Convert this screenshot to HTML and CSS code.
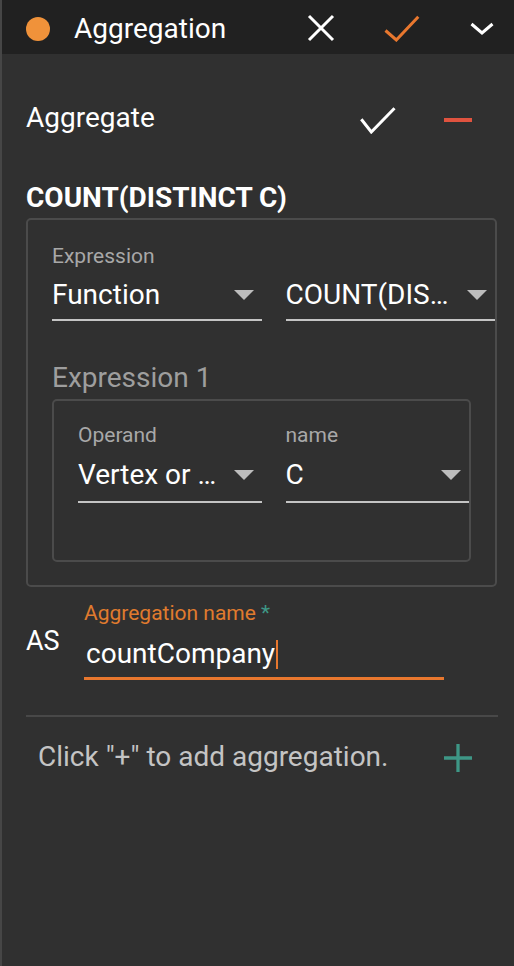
FILE: index.html
```html
<!DOCTYPE html>
<html>
<head>
<meta charset="utf-8">
<link rel="stylesheet" href="styles.css">
</head>
<body>
<div class="panel">
  <header class="header">
    <span class="dot"></span>
    <span class="title">Aggregation</span>
    <svg class="ic-close" width="28" height="28" viewBox="0 0 28 28"><path d="M2 2L26 26M26 2L2 26" stroke="#fff" stroke-width="3" fill="none"/></svg>
    <svg class="ic-ok" width="36" height="28" viewBox="0 0 36 28"><path d="M1.5 16.5L12.3 26L34.3 2.7" stroke="#e8772e" stroke-width="3" fill="none"/></svg>
    <svg class="ic-chev" width="24" height="14" viewBox="0 0 24 14"><path d="M1.5 2L12 11L22.5 2" stroke="#fff" stroke-width="3" fill="none"/></svg>
  </header>

  <div class="content">
    <div class="agg-row">
      <span class="agg-label">Aggregate</span>
      <svg class="ic-check" width="36" height="27" viewBox="0 0 36 27"><path d="M1.3 12.3L11.3 25L34.5 1.3" stroke="#fff" stroke-width="3" fill="none"/></svg>
      <svg class="ic-minus" width="28" height="4" viewBox="0 0 28 4"><rect x="0" y="0" width="28" height="4" fill="#e0533f"/></svg>
    </div>

    <div class="section-title">COUNT(DISTINCT C)</div>

    <div class="box outer">
      <div class="field-row">
        <div class="field">
          <div class="label">Expression</div>
          <div class="select"><span class="value">Function</span><span class="arrow"></span></div>
        </div>
        <div class="field">
          <div class="label">&nbsp;</div>
          <div class="select"><span class="value">COUNT(DIS…</span><span class="arrow"></span></div>
        </div>
      </div>

      <div class="sub-title">Expression 1</div>
      <div class="box inner">
        <div class="field-row">
          <div class="field">
            <div class="label">Operand</div>
            <div class="select"><span class="value">Vertex or …</span><span class="arrow"></span></div>
          </div>
          <div class="field">
            <div class="label">name</div>
            <div class="select"><span class="value">C</span><span class="arrow"></span></div>
          </div>
        </div>
      </div>
    </div>

    <div class="as-row">
      <span class="as">AS</span>
      <div class="name-field">
        <div class="label focus">Aggregation name <span class="req">*</span></div>
        <div class="input"><span class="input-text">countCompany</span><span class="caret"></span></div>
      </div>
    </div>

    <div class="divider"></div>

    <div class="add-row">
      <span class="hint">Click "+" to add aggregation.</span>
      <svg class="ic-plus" width="28" height="28" viewBox="0 0 28 28"><path d="M14 0V28M0 14H28" stroke="#3e9786" stroke-width="3.3" fill="none"/></svg>
    </div>
  </div>
</div>
</body>
</html>
```

FILE: styles.css
```css
* { box-sizing: border-box; }
html, body {
  margin: 0;
  padding: 0;
  background: #303030;
}
body {
  font-family: Roboto, "Noto Sans", sans-serif;
  color: #fff;
}
.panel {
  width: 514px;
  min-height: 966px;
  background: #303030;
  border-left: 2px solid #464646;
}
.header {
  height: 54px;
  background: #212121;
  display: flex;
  align-items: center;
  padding-left: 24px;
}
.dot {
  width: 24px;
  height: 24px;
  border-radius: 50%;
  background: #f0923a;
  flex: none;
  margin-top: 3px;
}
.title {
  font-size: 28px;
  line-height: 32px;
  margin-left: 24px;
  margin-top: 3px;
  flex: 1;
}
.ic-close { flex: none; margin-top: 2px; }
.ic-ok { flex: none; margin-left: 49px; margin-top: 2px; }
.ic-chev { flex: none; margin-left: 50px; margin-right: 20px; margin-top: 4px; }

.content {
  padding: 0 17px 0 24px;
}
.agg-row {
  display: flex;
  align-items: center;
  padding-top: 48px;
}
.agg-label {
  font-size: 28px;
  line-height: 32px;
  flex: 1;
}
.ic-check { flex: none; margin-top: 4px; }
.ic-minus { flex: none; margin-left: 48px; margin-right: 25px; margin-top: 4px; }

.section-title {
  font-size: 28px;
  line-height: 32px;
  font-weight: 700;
  margin-top: 48px;
}
.box {
  border: 2px solid #4b4b4b;
  border-radius: 5px;
}
.outer {
  margin-top: 4px;
  padding: 24px 0 23px 24px;
}
.inner {
  margin-top: 5px;
  margin-right: 24px;
  padding: 22px 0 57px 24px;
}
.inner .select {
  margin-top: 12px;
  padding-bottom: 10px;
}
.field-row {
  display: grid;
  grid-template-columns: 1fr 1fr;
  column-gap: 24px;
}
.label {
  font-size: 21px;
  line-height: 24px;
  color: #a8a8a8;
}
.select {
  margin-top: 11px;
  display: flex;
  align-items: center;
  border-bottom: 2px solid #c4c4c4;
  padding-bottom: 8px;
}
.value {
  font-size: 28px;
  line-height: 32px;
  flex: 1;
  white-space: nowrap;
  overflow: hidden;
}
.arrow {
  flex: none;
  width: 0;
  height: 0;
  border-left: 10px solid transparent;
  border-right: 10px solid transparent;
  border-top: 10px solid #bdbdbd;
  margin-right: 8px;
}
.sub-title {
  font-size: 28px;
  line-height: 32px;
  color: #9e9e9e;
  margin-top: 41px;
}
.as-row {
  display: flex;
  align-items: flex-start;
  margin-top: 14px;
}
.as {
  font-size: 27px;
  line-height: 32px;
  margin-top: 24px;
  width: 58px;
  flex: none;
}
.name-field {
  width: 360px;
}
.label.focus {
  color: #e07b2e;
}
.req {
  color: #3e9786;
}
.input {
  margin-top: 13px;
  display: flex;
  align-items: center;
  padding-left: 2px;
  padding-bottom: 7px;
  border-bottom: 3px solid #e8772e;
}
.input-text {
  font-size: 28px;
  line-height: 32px;
}
.caret {
  display: inline-block;
  width: 2px;
  height: 29px;
  background: #e8772e;
  margin-left: 1px;
}
.divider {
  margin-top: 35px;
  height: 2px;
  background: #484848;
  margin-right: -1px;
}
.add-row {
  display: flex;
  align-items: center;
  margin-top: 24px;
  padding-left: 12px;
}
.hint {
  font-size: 28px;
  line-height: 32px;
  color: #c4c4c4;
  flex: 1;
}
.ic-plus { flex: none; margin-right: 25px; margin-top: 2px; }
```
